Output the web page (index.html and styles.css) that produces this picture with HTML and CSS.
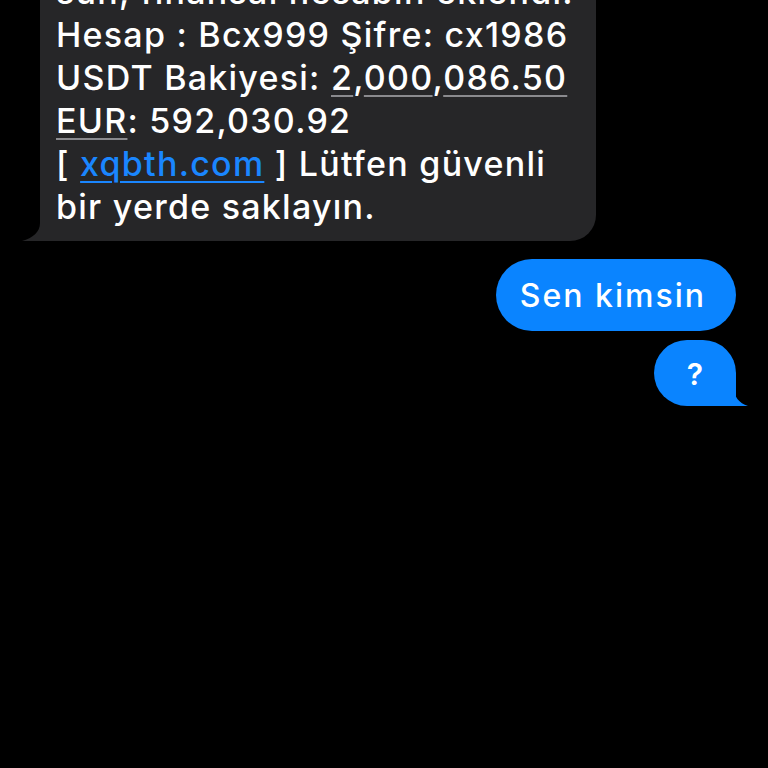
FILE: index.html
```html
<!DOCTYPE html>
<html lang="tr">
<head>
    <meta charset="UTF-8">
    <meta name="viewport" content="width=device-width, initial-scale=1.0">
    <title>Mesajlar</title>
    <link rel="stylesheet" href="styles.css">
</head>
<body>
    <div class="thread">
        <div class="bubble received">
            <p class="msg-text">
                sun, finansal hesabın eklendi.<br>
                Hesap : Bcx999 Şifre: cx1986<br>
                USDT Bakiyesi: <span class="data-link">2</span>,<span class="data-link">000</span>,<span class="data-link">086.50</span><br>
                <span class="data-link">EUR</span>: 592,030.92<br>
                [ <a class="url-link" href="#">xqbth.com</a> ] Lütfen güvenli<br>
                bir yerde saklayın.
            </p>
            <svg class="tail tail-left" width="32" height="24" viewBox="0 0 32 24">
                <path d="M20 0 L20 6 C20 15 13 21 2 24 L32 24 L32 0 Z" fill="#262628"/>
            </svg>
        </div>

        <div class="bubble sent wide">Sen kimsin</div>
        <div class="bubble sent last">
            ?
            <svg class="tail tail-right" width="26" height="24" viewBox="0 0 26 24">
                <path d="M10 0 L10 6 C10 15 15 21 24 24 L0 24 L0 0 Z" fill="#0a84ff"/>
            </svg>
        </div>
    </div>
</body>
</html>
```

FILE: styles.css
```css
* {
    margin: 0;
    padding: 0;
    box-sizing: border-box;
}

body {
    font-family: 'Inter', 'Liberation Sans', Arial, sans-serif;
    background: #000000;
    color: #ffffff;
    width: 768px;
    height: 768px;
    overflow: hidden;
}

.thread {
    display: flex;
    flex-direction: column;
}

.bubble {
    position: relative;
    border-radius: 26px;
}

.received {
    background: #262628;
    align-self: flex-start;
    width: 556px;
    margin-left: 40px;
    margin-top: -40px;
    padding: 10px 0 13px 16px;
    border-bottom-left-radius: 8px;
}

.msg-text {
    font-size: 34px;
    line-height: 43px;
    font-weight: 500;
    letter-spacing: 1.25px;
    white-space: nowrap;
}

.data-link {
    text-decoration: underline;
    text-decoration-color: #8a8a8e;
    text-decoration-thickness: 2px;
    text-underline-offset: 5px;
}

.url-link {
    color: #1a86ff;
    text-decoration: underline;
    text-decoration-thickness: 2px;
    text-underline-offset: 5px;
}

.tail {
    position: absolute;
    bottom: 0;
    display: block;
}

.tail-left {
    left: -20px;
}

.tail-right {
    right: -14px;
}

.sent {
    background: #0a84ff;
    align-self: flex-end;
    margin-right: 32px;
    font-size: 32px;
    font-weight: 500;
    letter-spacing: 2px;
    display: flex;
    align-items: center;
    justify-content: center;
}

.wide {
    margin-top: 18px;
    height: 72px;
    padding: 0 30px 0 24px;
    border-radius: 36px;
}

.last {
    margin-top: 9px;
    width: 82px;
    height: 66px;
    border-radius: 33px;
    border-bottom-right-radius: 10px;
    font-size: 30px;
    font-weight: 600;
    padding-top: 2px;
    letter-spacing: 0;
}
```
